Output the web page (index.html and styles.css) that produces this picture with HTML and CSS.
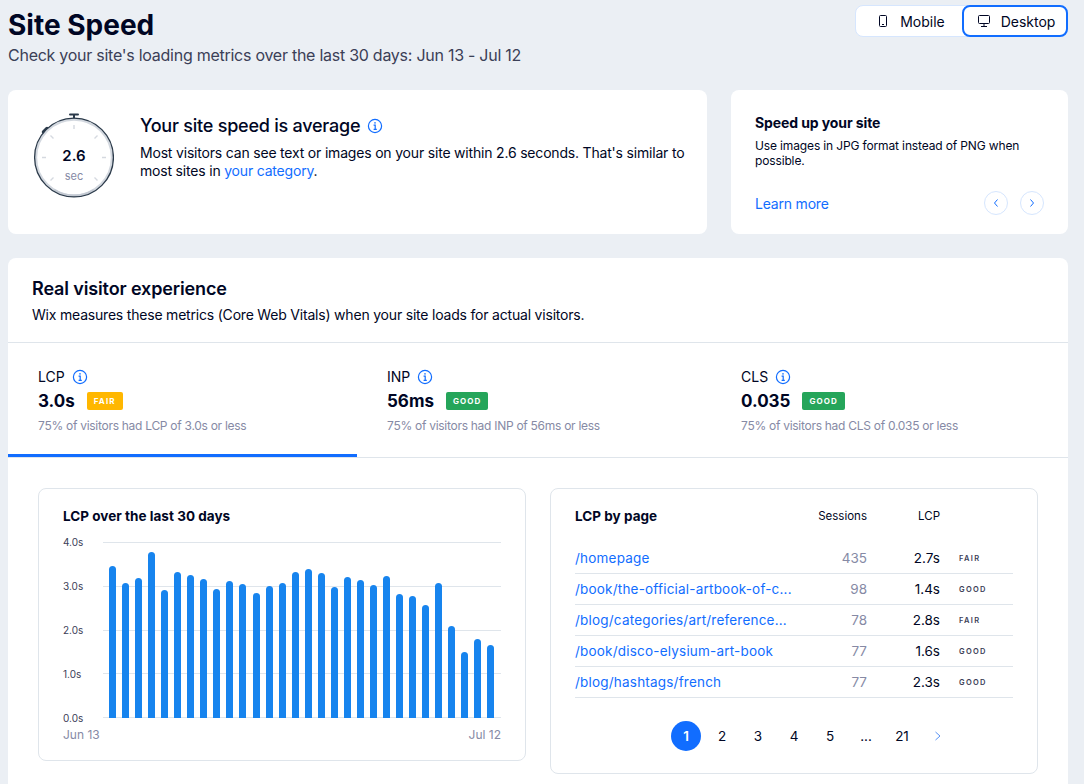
FILE: index.html
```html
<!DOCTYPE html>
<html lang="en">
<head>
<meta charset="utf-8">
<title>Site Speed</title>
<link rel="stylesheet" href="styles.css">
</head>
<body>
<main class="page">
  <header class="header">
    <div>
      <h1 class="title">Site Speed</h1>
      <p class="subtitle">Check your site's loading metrics over the last 30 days: Jun 13 - Jul 12</p>
    </div>
    <div class="toggle">
      <button class="toggle-btn">
        <svg width="18" height="18" viewBox="0 0 18 18" fill="none" stroke="#000624" stroke-width="1"><rect x="5.5" y="3.5" width="7" height="11" rx="1"/><path d="M8 12.5h2"/></svg>
        Mobile
      </button>
      <button class="toggle-btn toggle-btn-active">
        <svg width="18" height="18" viewBox="0 0 18 18" fill="none" stroke="#000624" stroke-width="1"><rect x="3.5" y="3.5" width="11" height="8" rx="1"/><path d="M9 11.5v3M6 14.5h6"/></svg>
        Desktop
      </button>
    </div>
  </header>

  <section class="top-row">
    <div class="card summary">
      <svg class="watch" width="84" height="88" viewBox="0 0 84 88" fill="none">
        <path d="M40 2.5h8M44 3v4" stroke="#2b3a4a" stroke-width="2" stroke-linecap="round"/>
        <path d="M13.5 20l3.5-3.5" stroke="#2b3a4a" stroke-width="3.5" stroke-linecap="round"/>
        <circle cx="44" cy="45.5" r="38" fill="#fff" stroke="#d3d8df" stroke-width="2.4"/>
        <path d="M24 78a38 38 0 0 0 40 0" stroke="#c3c9d2" stroke-width="2.4"/>
        <circle cx="44" cy="45.5" r="39.4" stroke="#2b3a4a" stroke-width="1.3"/>
        <g stroke="#d5d9e0" stroke-width="1.4">
          <path d="M44 13v4M12 45.5h4M72 45.5h4M20.5 23.5l3 3M67.5 23.5l-3 3M20.5 68.5l3-3M67.5 68.5l-3-3"/>
        </g>
      </svg>
      <div class="watch-text">
        <span class="watch-value">2.6</span>
        <span class="watch-unit">sec</span>
      </div>
      <div class="summary-body">
        <h2 class="summary-title">Your site speed is average
          <svg class="info" width="16" height="16" viewBox="0 0 16 16" fill="none" stroke="#116dff" stroke-width="1.2"><circle cx="8" cy="8" r="6.6"/><path d="M6.6 7.2H8.2V11.4M6.6 11.4h3.2"/><path d="M8 4.2v1.4" stroke-width="1.6"/></svg>
        </h2>
        <p class="summary-text">Most visitors can see text or images on your site within 2.6 seconds. That's similar to most sites in <a class="link" href="#">your category</a>.</p>
      </div>
    </div>
    <div class="card tip">
      <h3 class="tip-title">Speed up your site</h3>
      <p class="tip-text">Use images in JPG format instead of PNG when possible.</p>
      <div class="tip-foot">
        <a class="link tip-link" href="#">Learn more</a>
        <div class="tip-nav">
          <span class="round-btn"><svg width="8" height="10" viewBox="0 0 8 10" fill="none" stroke="#116dff" stroke-width="1"><path d="M5.5 1.5L2.5 5l3 3.5"/></svg></span>
          <span class="round-btn"><svg width="8" height="10" viewBox="0 0 8 10" fill="none" stroke="#116dff" stroke-width="1"><path d="M2.5 1.5L5.5 5l-3 3.5"/></svg></span>
        </div>
      </div>
    </div>
  </section>

  <section class="card vitals">
    <div class="vitals-head">
      <h2 class="vitals-title">Real visitor experience</h2>
      <p class="vitals-text">Wix measures these metrics (Core Web Vitals) when your site loads for actual visitors.</p>
    </div>
    <div class="tabs">
      <div class="tab tab-active">
        <div class="tab-label">LCP <svg class="info" width="16" height="16" viewBox="0 0 16 16" fill="none" stroke="#116dff" stroke-width="1.2"><circle cx="8" cy="8" r="6.6"/><path d="M6.6 7.2H8.2V11.4M6.6 11.4h3.2"/><path d="M8 4.2v1.4" stroke-width="1.6"/></svg></div>
        <div class="tab-value">3.0s <span class="badge badge-fair">FAIR</span></div>
        <div class="tab-note">75% of visitors had LCP of 3.0s or less</div>
      </div>
      <div class="tab">
        <div class="tab-label">INP <svg class="info" width="16" height="16" viewBox="0 0 16 16" fill="none" stroke="#116dff" stroke-width="1.2"><circle cx="8" cy="8" r="6.6"/><path d="M6.6 7.2H8.2V11.4M6.6 11.4h3.2"/><path d="M8 4.2v1.4" stroke-width="1.6"/></svg></div>
        <div class="tab-value">56ms <span class="badge badge-good">GOOD</span></div>
        <div class="tab-note">75% of visitors had INP of 56ms or less</div>
      </div>
      <div class="tab">
        <div class="tab-label">CLS <svg class="info" width="16" height="16" viewBox="0 0 16 16" fill="none" stroke="#116dff" stroke-width="1.2"><circle cx="8" cy="8" r="6.6"/><path d="M6.6 7.2H8.2V11.4M6.6 11.4h3.2"/><path d="M8 4.2v1.4" stroke-width="1.6"/></svg></div>
        <div class="tab-value">0.035 <span class="badge badge-good">GOOD</span></div>
        <div class="tab-note">75% of visitors had CLS of 0.035 or less</div>
      </div>
    </div>

    <div class="panels">
      <div class="panel chart-panel">
        <h3 class="panel-title">LCP over the last 30 days</h3>
        <div class="chart">
          <div class="y-axis"><span>4.0s</span><span>3.0s</span><span>2.0s</span><span>1.0s</span><span>0.0s</span></div>
          <div class="plot">
            <div class="grid-lines"><i></i><i></i><i></i><i></i><i></i></div>
            <div class="bars">
              <b style="height:152px"></b><b style="height:135px"></b><b style="height:140px"></b><b style="height:166px"></b><b style="height:128px"></b><b style="height:146px"></b><b style="height:143px"></b><b style="height:139px"></b><b style="height:129px"></b><b style="height:137px"></b><b style="height:134px"></b><b style="height:125px"></b><b style="height:132px"></b><b style="height:135px"></b><b style="height:146px"></b><b style="height:149px"></b><b style="height:145px"></b><b style="height:131px"></b><b style="height:141px"></b><b style="height:138px"></b><b style="height:133px"></b><b style="height:142px"></b><b style="height:124px"></b><b style="height:122px"></b><b style="height:113px"></b><b style="height:135px"></b><b style="height:92px"></b><b style="height:66px"></b><b style="height:79px"></b><b style="height:73px"></b>
            </div>
          </div>
        </div>
        <div class="x-axis"><span>Jun 13</span><span>Jul 12</span></div>
      </div>

      <div class="panel table-panel">
        <div class="table-head">
          <h3 class="panel-title table-title">LCP by page</h3>
          <span class="col-sessions">Sessions</span>
          <span class="col-lcp">LCP</span>
        </div>
        <div class="table-row"><a class="link row-page" href="#">/homepage</a><span class="col-sessions muted">435</span><span class="col-lcp">2.7s</span><span class="col-status">FAIR</span></div>
        <div class="table-row"><a class="link row-page" href="#">/book/the-official-artbook-of-c...</a><span class="col-sessions muted">98</span><span class="col-lcp">1.4s</span><span class="col-status">GOOD</span></div>
        <div class="table-row"><a class="link row-page" href="#">/blog/categories/art/reference...</a><span class="col-sessions muted">78</span><span class="col-lcp">2.8s</span><span class="col-status">FAIR</span></div>
        <div class="table-row"><a class="link row-page" href="#">/book/disco-elysium-art-book</a><span class="col-sessions muted">77</span><span class="col-lcp">1.6s</span><span class="col-status">GOOD</span></div>
        <div class="table-row"><a class="link row-page" href="#">/blog/hashtags/french</a><span class="col-sessions muted">77</span><span class="col-lcp">2.3s</span><span class="col-status">GOOD</span></div>
        <nav class="pager">
          <span class="page-num page-current">1</span><span class="page-num">2</span><span class="page-num">3</span><span class="page-num">4</span><span class="page-num">5</span><span class="page-num">...</span><span class="page-num">21</span>
          <span class="page-num"><svg width="8" height="10" viewBox="0 0 8 10" fill="none" stroke="#5a94f5" stroke-width="1"><path d="M1.5 1l4.5 4-4.5 4"/></svg></span>
        </nav>
      </div>
    </div>
  </section>
</main>
</body>
</html>
```

FILE: styles.css
```css
* { box-sizing: border-box; }
html, body { margin: 0; height: 784px; overflow: hidden; }
body { background: #ebeff4; font-family: Inter, "Noto Sans", sans-serif; color: #000624; }
h1, h2, h3, p { margin: 0; }
a { text-decoration: none; }
.link { color: #116dff; }
.page { padding: 0 16px 0 8px; }

.header { display: flex; justify-content: space-between; height: 90px; }
.title { font-size: 28px; line-height: 36px; font-weight: 700; padding-top: 7px; }
.subtitle { font-size: 16px; line-height: 24px; color: #3b4057; letter-spacing: -0.26px; }
.toggle { display: flex; height: 32px; margin-top: 5px; background: #fff; border-radius: 8px; border: 1px solid #d6e6fe; width: 213px; }
.toggle-btn { flex: 1; display: flex; align-items: center; justify-content: center; gap: 8px; border: 0; background: none; font: inherit; font-size: 14px; color: #000624; padding: 0; margin: 0; border-radius: 8px; }
.toggle-btn-active { border: 2px solid #116dff; margin: -1px; flex: 0 0 106px; }

.top-row { display: flex; gap: 24px; margin-bottom: 24px; }
.card { background: #fff; border-radius: 8px; }
.summary { position: relative; width: 699px; height: 144px; display: flex; padding: 24px 20px 0 132px; }
.watch { position: absolute; left: 22px; top: 22px; }
.watch-text { position: absolute; left: 26px; top: 56px; width: 80px; display: flex; flex-direction: column; align-items: center; }
.watch-value { font-size: 15px; line-height: 20px; font-weight: 600; }
.watch-unit { font-size: 11px; line-height: 20px; color: #868aa5; }
.summary-title { font-size: 18px; line-height: 24px; font-weight: 500; display: flex; align-items: center; gap: 7px; letter-spacing: -0.23px; }
.summary-text { font-size: 14px; line-height: 18px; margin-top: 6px; color: #000624; letter-spacing: -0.19px; }
.tip { width: 337px; height: 144px; padding: 24px 24px 0; display: flex; flex-direction: column; }
.tip-title { font-size: 14px; line-height: 18px; font-weight: 700; letter-spacing: -0.1px; }
.tip-text { font-size: 12px; line-height: 15px; margin-top: 6px; color: #000624; letter-spacing: -0.14px; }
.tip-foot { display: flex; align-items: center; justify-content: space-between; margin-top: 23px; }
.tip-link { font-size: 14px; letter-spacing: -0.2px; }
.tip-nav { display: flex; gap: 12px; }
.round-btn { width: 24px; height: 24px; border: 1px solid #d6e6fe; border-radius: 50%; display: flex; align-items: center; justify-content: center; }

.vitals { width: 1060px; height: 560px; }
.vitals-head { padding: 19px 24px 0; height: 85px; border-bottom: 1px solid #dfe5eb; }
.vitals-title { font-size: 18px; line-height: 24px; font-weight: 600; letter-spacing: -0.13px; }
.vitals-text { font-size: 14px; line-height: 18px; margin-top: 5px; letter-spacing: -0.2px; }
.tabs { display: grid; grid-template-columns: 349px 354px 357px; height: 115px; border-bottom: 1px solid #dfe5eb; }
.tab { padding: 25px 30px 0; }
.tab-active { border-bottom: 3px solid #116dff; height: 114px; }
.tab-label { display: flex; align-items: center; gap: 7px; font-size: 14px; line-height: 18px; }
.tab-value { display: flex; align-items: center; gap: 12px; font-size: 17px; line-height: 24px; font-weight: 700; margin-top: 3px; }
.tab-note { font-size: 12px; line-height: 16px; color: #868aa5; margin-top: 5px; letter-spacing: -0.28px; }
.badge { font-size: 8px; line-height: 18px; height: 18px; padding: 0 7px; border-radius: 2px; color: #fff; font-weight: 700; letter-spacing: 1.1px; }
.badge-fair { background: #ffb700; }
.badge-good { background: #25a55a; }

.panels { display: flex; align-items: flex-start; gap: 24px; padding: 30px 30px 0; }
.panel { width: 488px; border: 1px solid #dfe5eb; border-radius: 8px; padding: 0 24px; }
.panel-title { font-size: 13.5px; line-height: 16px; font-weight: 700; letter-spacing: 0.03px; }
.chart-panel { height: 273px; padding-top: 19px; }
.chart { display: flex; margin-top: 13px; height: 186px; }
.y-axis { width: 40px; height: 186px; display: flex; flex-direction: column; justify-content: space-between; font-size: 10px; line-height: 10px; color: #3b4057; }
.plot { position: relative; width: 398px; height: 176px; margin-top: 5px; }
.grid-lines { position: absolute; inset: 0; display: flex; flex-direction: column; justify-content: space-between; }
.grid-lines i { display: block; height: 1px; background: #dfe5eb; }
.bars { position: absolute; inset: 0; display: flex; align-items: flex-end; padding-left: 6px; gap: 6.05px; }
.bars b { display: block; width: 7px; background: #1784ee; border-radius: 4px 4px 0 0; }
.x-axis { display: flex; justify-content: space-between; font-size: 12px; line-height: 16px; color: #868aa5; margin-top: 4px; }

.table-panel { height: 286px; padding: 18px 24px 0; }
.table-head { display: flex; align-items: center; height: 18px; font-size: 11.5px; margin-bottom: 18px; }
.table-title { width: 242px; }
.col-sessions { width: 50px; text-align: right; flex: none; }
.col-lcp { width: 73px; text-align: right; flex: none; }
.col-status { margin-left: 19px; font-size: 7.5px; font-weight: 600; letter-spacing: 1.3px; color: #3b4057; flex: none; }
.table-row { display: flex; align-items: center; height: 31px; font-size: 13.5px; border-bottom: 1px solid #dfe5eb; width: 438px; }
.row-page { width: 242px; flex: none; white-space: nowrap; letter-spacing: 0.2px; }
.muted { color: #868aa5; }
.pager { display: flex; margin-top: 23px; margin-left: 96px; }
.page-num { flex: none; width: 30px; height: 30px; margin-right: 6px; display: flex; align-items: center; justify-content: center; font-size: 13.5px; }
.page-current { background: #116dff; color: #fff; border-radius: 50%; font-weight: 600; }
```
